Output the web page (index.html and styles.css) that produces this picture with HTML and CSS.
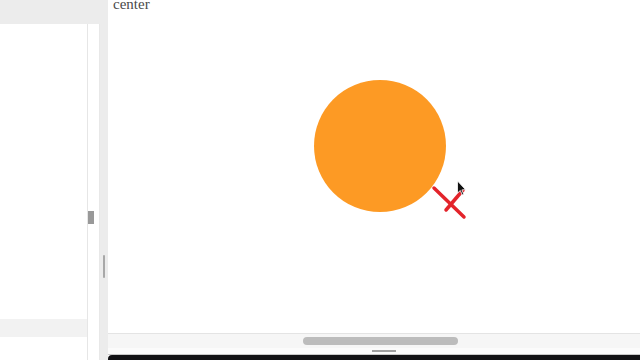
FILE: index.html
```html
<!DOCTYPE html>
<html>
<head>
<meta charset="utf-8">
<link rel="stylesheet" href="styles.css">
</head>
<body>
<div class="app">
  <div class="side">
    <div class="side-top"></div>
    <div class="side-body">
      <div class="side-main">
        <div class="side-fill"></div>
        <div class="side-band"></div>
        <div class="side-rest"></div>
      </div>
      <div class="side-scroll">
        <div class="side-thumb"></div>
      </div>
    </div>
  </div>
  <div class="gutter">
    <div class="gutter-top"></div>
    <div class="grip"></div>
  </div>
  <div class="main">
    <div class="canvas">
      <div class="label">center</div>
      <svg class="art" width="532" height="333" viewBox="108 0 532 333">
        <circle cx="380" cy="146" r="66" fill="#fd9a24"/>
        <line x1="434" y1="188" x2="464" y2="217" stroke="#e3242b" stroke-width="3.5" stroke-linecap="round"/>
        <line x1="446" y1="210" x2="463" y2="190" stroke="#e3242b" stroke-width="3.5" stroke-linecap="round"/>
        <path d="M457.5 181 L457.5 193 L460.3 190.5 L462.3 195 L463.8 194.3 L461.9 189.9 L465.5 189.6 Z" fill="#111" stroke="#fff" stroke-width="0.8"/>
      </svg>
    </div>
    <div class="hscroll">
      <div class="hthumb"></div>
    </div>
    <div class="dock">
      <div class="dock-grip"></div>
    </div>
    <div class="terminal"></div>
  </div>
</div>
</body>
</html>
```
FILE: styles.css
```css
html, body {
  margin: 0;
  padding: 0;
  width: 640px;
  height: 360px;
  overflow: hidden;
  background: #ffffff;
}
.app {
  display: flex;
  width: 640px;
  height: 360px;
}
.side {
  width: 100px;
  display: flex;
  flex-direction: column;
  background: #ffffff;
}
.side-top {
  height: 24px;
  background: #ececec;
}
.side-body {
  flex: 1;
  display: flex;
}
.side-main {
  width: 87px;
  display: flex;
  flex-direction: column;
  border-right: 1px solid #e6e6e6;
}
.side-fill {
  height: 295px;
}
.side-band {
  height: 18px;
  background: #f2f2f2;
}
.side-rest {
  flex: 1;
}
.side-scroll {
  flex: 1;
  padding-top: 187px;
  border-right: 1px solid #e8e8e8;
}
.side-thumb {
  width: 6px;
  height: 13px;
  background: #999999;
}
.gutter {
  width: 8px;
  background: #ececec;
  display: flex;
  flex-direction: column;
  align-items: center;
}
.gutter-top {
  height: 255px;
}
.grip {
  width: 2px;
  height: 23px;
  background: #a8a8a8;
  border-radius: 1px;
}
.main {
  width: 532px;
  display: flex;
  flex-direction: column;
}
.canvas {
  position: relative;
  height: 333px;
  border-bottom: 1px solid #e4e4e4;
  overflow: hidden;
}
.label {
  font-family: "Liberation Serif", "Times New Roman", serif;
  font-size: 15px;
  line-height: 16px;
  color: #4a4a4a;
  margin-top: -4px;
  padding-left: 5px;
}
.art {
  position: absolute;
  left: 0;
  top: 0;
}
.hscroll {
  height: 14px;
  box-sizing: border-box;
  background: #f6f6f6;
  padding-top: 3px;
}
.hthumb {
  margin-left: 195px;
  width: 155px;
  height: 8px;
  border-radius: 4px;
  background: #bcbcbc;
}
.dock {
  height: 6px;
  background: #fbfbfb;
  display: flex;
  justify-content: center;
  align-items: center;
  border-bottom: 1px solid #c8c8c8;
}
.dock-grip {
  width: 24px;
  height: 2px;
  background: #a0a0a0;
  margin-left: 20px;
}
.terminal {
  flex: 1;
  background: #111114;
  border-top-left-radius: 4px;
}
```
